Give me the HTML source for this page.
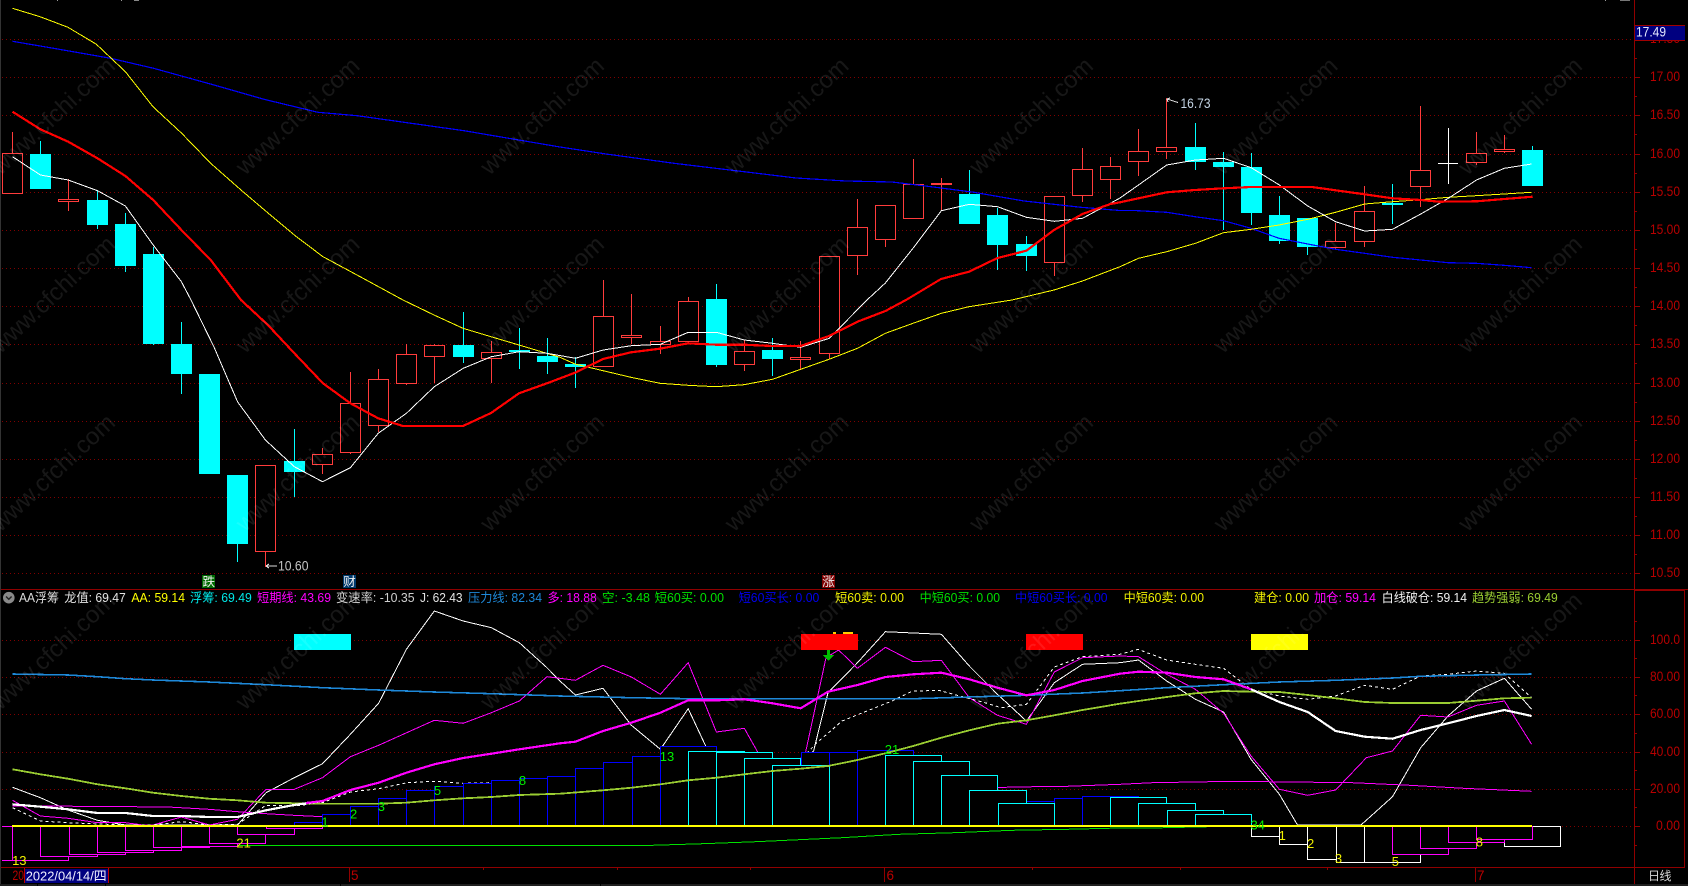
<!DOCTYPE html>
<html lang="zh"><head><meta charset="utf-8"><title>AA浮筹</title>
<style>
html,body{margin:0;padding:0;background:#000;width:1688px;height:886px;overflow:hidden}
svg{display:block;position:absolute;left:0;top:0}
text{font-family:"Liberation Sans","Noto Sans CJK SC",sans-serif}
.c{shape-rendering:crispEdges}
.l{fill:none;stroke-linejoin:round;shape-rendering:crispEdges}
.ax text{font-size:13.5px;fill:#b80000}
.lg text{font-size:12.5px}
.n text{font-size:13px;text-anchor:middle}
.wm text{font-size:24px;fill:#fff;fill-opacity:.09}
</style></head><body>
<svg width="1688" height="886" viewBox="0 0 1688 886" xmlns="http://www.w3.org/2000/svg">
<rect width="1688" height="886" fill="#000"/>
<!-- frame -->
<g class="c">
<rect x="0" y="0" width="1" height="884" fill="#333"/>
<rect x="57" y="0" width="1" height="1" fill="#999"/><rect x="121" y="0" width="1" height="1" fill="#999"/><rect x="134" y="0" width="5" height="1" fill="#888"/>
<rect x="1605" y="0" width="1" height="1" fill="#999"/><rect x="1620" y="0" width="10" height="1" fill="#777"/>
</g>
<!-- grid -->
<path class="l" stroke="#800000" stroke-dasharray="1 3" d="M2 39.5H1634M2 77.5H1634M2 115.5H1634M2 154.5H1634M2 192.5H1634M2 230.5H1634M2 268.5H1634M2 306.5H1634M2 344.5H1634M2 383.5H1634M2 421.5H1634M2 459.5H1634M2 497.5H1634M2 535.5H1634M2 573.5H1634M2 640.5H1634M2 677.5H1634M2 714.5H1634M2 752.5H1634M2 789.5H1634M2 826.5H1634"/>
<!-- candle wicks -->
<path class="l" stroke="#ff3c3c" d="M12.5 132V153M68.5 179V211M265.5 552V567M322.5 448V474M350.5 372V454M378.5 369V432M406.5 344V385M434.5 344V383M491.5 341V383M603.5 280V367M631.5 294V344M660.5 326V354M688.5 297V342M744.5 340V371M800.5 341V369M829.5 256V359M857.5 199V275M885.5 205V247M913.5 159V219M941.5 178V211M1054.5 196V276M1082.5 148V202M1110.5 157V199M1138.5 129V176M1166.5 98V159M1335.5 223V249M1364.5 186V247M1420.5 106V207M1476.5 132V165M1504.5 135V153"/>
<path class="l" stroke="#00ffff" d="M40.5 141V189M97.5 190V229M125.5 213V272M153.5 247V345M181.5 322V394M237.5 475V562M294.5 429V497M463.5 312V363M519.5 328V369M547.5 338V374M575.5 357V388M716.5 284V367M772.5 338V376M969.5 170V224M997.5 208V270M1026.5 236V271M1195.5 123V170M1223.5 152V230M1251.5 153V225M1279.5 196V244M1307.5 218V255M1392.5 184V224M1532.5 146V186"/>
<!-- cyan bodies -->
<g class="c" fill="#00ffff">
<rect x="30" y="154" width="21" height="35"/><rect x="87" y="200" width="21" height="25"/><rect x="115" y="224" width="21" height="42"/><rect x="143" y="254" width="21" height="90"/><rect x="171" y="344" width="21" height="30"/><rect x="199" y="374" width="21" height="100"/><rect x="227" y="475" width="21" height="69"/><rect x="284" y="461" width="21" height="11"/><rect x="453" y="345" width="21" height="12"/><rect x="509" y="350" width="21" height="2"/><rect x="537" y="356" width="21" height="6"/><rect x="565" y="364" width="21" height="3"/><rect x="706" y="299" width="21" height="66"/><rect x="762" y="350" width="21" height="9"/><rect x="959" y="194" width="21" height="30"/><rect x="987" y="215" width="21" height="30"/><rect x="1016" y="244" width="21" height="12"/><rect x="1185" y="147" width="21" height="15"/><rect x="1213" y="162" width="21" height="5"/><rect x="1241" y="167" width="21" height="46"/><rect x="1269" y="215" width="21" height="26"/><rect x="1297" y="218" width="21" height="29"/><rect x="1382" y="203" width="21" height="2"/><rect x="1522" y="150" width="21" height="36"/>
</g>
<!-- red hollow bodies -->
<g class="c" fill="#000" stroke="#ff3c3c">
<rect x="2.5" y="153.5" width="20" height="40"/><rect x="58.5" y="199.5" width="20" height="2"/><rect x="255.5" y="465.5" width="20" height="86"/><rect x="312.5" y="454.5" width="20" height="10"/><rect x="340.5" y="403.5" width="20" height="49"/><rect x="368.5" y="379.5" width="20" height="46"/><rect x="396.5" y="354.5" width="20" height="29"/><rect x="424.5" y="345.5" width="20" height="11"/><rect x="481.5" y="352.5" width="20" height="6"/><rect x="593.5" y="316.5" width="20" height="50"/><rect x="621.5" y="335.5" width="20" height="2"/><rect x="650.5" y="341.5" width="20" height="3"/><rect x="678.5" y="301.5" width="20" height="40"/><rect x="734.5" y="351.5" width="20" height="13"/><rect x="790.5" y="357.5" width="20" height="2"/><rect x="819.5" y="256.5" width="20" height="97"/><rect x="847.5" y="227.5" width="20" height="28"/><rect x="875.5" y="205.5" width="20" height="34"/><rect x="903.5" y="184.5" width="20" height="34"/><rect x="1044.5" y="196.5" width="20" height="66"/><rect x="1072.5" y="169.5" width="20" height="26"/><rect x="1100.5" y="166.5" width="20" height="13"/><rect x="1128.5" y="151.5" width="20" height="10"/><rect x="1156.5" y="147.5" width="20" height="4"/><rect x="1325.5" y="241.5" width="20" height="6"/><rect x="1354.5" y="211.5" width="20" height="30"/><rect x="1410.5" y="170.5" width="20" height="16"/><rect x="1466.5" y="153.5" width="20" height="9"/><rect x="1494.5" y="149.5" width="20" height="2"/>
</g>
<rect class="c" x="931" y="183" width="21" height="2" fill="#ff3c3c"/>
<path class="l" stroke="#fff" d="M1448.5 128V184M1438 163.5H1458"/>
<!-- MAs -->
<polyline class="l" stroke="#0000ff" stroke-width="1.2" points="12.5,41.3 53.6,48.3 110.7,58.3 153.6,68.3 214,85 264,99.3 318,112.3 357,115.7 407,122.7 464,130.7 560,147 606,154 674,163.3 749,172.3 796,178 846,181 892,182 931,186.7 974,192.3 1024,201 1081,207.3 1120,210.5 1134,210.5 1166.7,212.3 1195,216.7 1223.6,220.7 1251,228.3 1279,238.3 1307.7,244 1335.6,249.3 1364.6,253.3 1392.5,257.3 1420.7,260 1448,262.7 1476,263.3 1504,265.3 1531.6,267.7"/>
<polyline class="l" stroke="#ffff00" stroke-width="1" points="12.5,8.3 40,16.7 68,27.3 96.4,44.3 125.4,71.7 153,106.7 181.4,133 210.7,163.3 241,190 268,213 296.4,236.7 323,256.7 357,275 403,300 434,315 463,328.3 491,336.7 519,345 560,357.3 575,364 603,370.7 631,377.3 660,383.3 688,385.3 716,386.7 744,384.7 772.5,379.3 800.7,369.3 829,359.3 857.5,348.3 885.4,333.3 913,323.3 941.4,313.3 969,306.7 1012,300 1054,290 1082.5,281 1120,266.7 1138.5,258.3 1166.7,251.7 1195.4,243.3 1223.6,232.7 1251,229.3 1279,225 1307.7,219.3 1335.6,212.3 1364.6,204 1392.5,201.7 1420.7,199.7 1448,197.3 1476,195.7 1504,194 1531.6,192.3"/>
<polyline class="l" stroke="#fff" stroke-width="1" points="12.5,156.7 40.4,175 68.2,180 97.5,190.7 125.4,206 153.2,245 181.4,281.7 191,300 214,347 237.5,401.7 265.4,440 294.3,466.7 322.5,481.7 350.4,467.7 378.2,433.3 406.4,413.3 434.3,386.7 463.2,368.3 491.4,356.7 519.3,351.7 547.1,353.3 575.4,358.3 603.2,350 631.4,345.7 660.4,344.3 688.2,332.3 716.4,332.3 744.3,340 772.5,343.3 800.7,347.3 829.3,338.3 867,300 885.4,283 913.2,248 941.4,210.7 969.3,204.3 997.5,206.7 1026.4,217.3 1054.3,221.3 1082.5,218.3 1110.4,203.3 1120,198 1138.5,185 1166.7,165 1195.4,160 1223.6,158.3 1251.2,167.7 1279.4,185 1307.7,206 1335.6,221.7 1364.6,231 1392.5,229.3 1420.7,214 1448.3,198.3 1476.5,180 1504.4,168.3 1531.6,164"/>
<polyline class="l" stroke="#ff0000" stroke-width="2.2" points="12.5,111.7 40.4,129.3 68.2,141.7 97.5,158.3 125.4,176 153.2,200 181.4,230 210.7,260 241,300 267.9,325 296,355 323,383.3 350.4,403.3 378.2,418.3 403,426 463,426 491,413 519,393.3 547,383.3 575,372.7 603,359 631,352.3 660,348.7 688,343.3 716,344.7 744,344.7 772,346 800.7,346 829,336 857.5,321.7 885.4,311 906,300 941,279 969,271.7 997.5,258 1026.4,250.7 1054,230 1082.5,214 1110.4,204 1120,202.3 1138.5,198.3 1166.7,192.3 1195,190 1223.6,188.3 1251,187 1279,187 1312,187 1335.6,190.3 1364.6,194.3 1392.5,198.3 1420.7,200 1439,201.7 1476.5,201.3 1504.4,199 1532.7,196.7"/>
<!-- thin lower lines -->
<polyline class="l" stroke="#fff" points="12.5,787.3 40.4,797.7 68,810 97.5,820.3 125.4,825 237.5,825 266,792.7 294.3,777.7 322.5,763.7 350.4,734.3 378.6,703.3 406.4,649.3 434.3,611 463.2,621 491.4,627.7 519.3,642.7 547,667.7 560,681 575.4,695 603,688.3 631.4,725.3 660.4,749.3 688.2,708.7 705.7,746 716,760 805,760 813.6,751 828,692.7 857.5,662.7 885.4,631.7 941.4,634.3 969.3,666 997.5,694.3 1026.4,721 1054.3,682.7 1082.5,664.3 1120,662.7 1138.5,660 1166.7,681 1195.4,699.3 1223.6,712 1251,759.3 1279.4,794.3 1297.5,825 1361,825 1392.5,796.7 1420.7,747.7 1448,716 1476.5,691 1504.4,678.3 1531.6,709.3"/>
<polyline class="l" stroke="#ff00ff" points="12.5,800.3 40.4,816 68,818.3 97.5,822.7 125.4,822.7 143,825 153,825 181.4,817 209.3,825 237.5,819.3 266,789.3 294.3,789.3 322.5,777.7 350.4,756.7 378.6,745.3 434.3,720.3 463.2,723.3 491.4,712.7 519.3,701 547,676.7 560,678.3 575.4,680.3 603,665.3 631.4,677 660.4,694.3 688.2,662.7 716.4,732 744.3,728.3 757.5,751.7 770,765 796,765 805.7,751.7 826,657.7 838.6,650 857.5,668.3 885.4,647.3 913.2,661.7 941.4,660.3 969.3,697.7 997.5,715.3 1026.4,724.3 1054.3,672 1082.5,657.7 1120,656 1138.5,656.7 1166.7,674.3 1195.4,689.3 1223.6,713.3 1251,756 1279.4,789.3 1307.7,795.3 1335.6,790 1366.4,757.7 1392.5,751 1420.7,715.3 1448,717 1476.5,705.3 1504.4,701 1531.6,744.3"/>
<polyline class="l" stroke="#fff" stroke-dasharray="3 3" points="12.5,807.7 40.4,821 68,822.7 125.4,825 153,825 182,821.7 209.3,825 237.5,824.3 266,805.3 294.3,806 322.5,802.7 350.4,792 378.6,788.7 407,782.7 434.3,781.3 463,783.3 491,782.7 520,782 800,760 817,742.7 842,721 867,711 892,701 912,691.3 938.6,690.3 960,696 985,702.7 1001,707.7 1026.4,704.3 1054.3,667 1082.5,656.7 1120,654.3 1138,649.3 1166.7,660 1195.4,664.3 1223.6,668.3 1251,689.3 1279.4,696 1307.7,699.3 1335.6,696 1364.6,685.3 1392.5,689.3 1420.7,676 1448,674.3 1476.5,671 1504.4,673.3 1531.6,697.7"/>
<polyline class="l" stroke="#ff00ff" points="12.5,806 40.4,806 168,807 209,809.3 237.5,811.7 266,813.7 294,815.3 322.5,816.7 340,817 980,789 997.5,787.7 1012,787 1067,786.3 1120,784.3 1152.6,782.7 1210.6,781.7 1265,781.7 1352,782.7 1410,785.3 1464,788.3 1531.6,791.3"/>
<polyline class="l" stroke="#00e000" points="237,845.5 645.7,845.5 703,843.7 756,841.7 842,837.7 899,834.3 954.6,832.7 1012,830.3 1067,829.3 1120,828 1152,828 1209,826.7"/>
<!-- histogram bars -->
<g class="c" fill="#000" stroke="#0000ff">
<rect x="294.5" y="822.5" width="56" height="4"/><rect x="322.5" y="814.5" width="56" height="12"/><rect x="350.5" y="806.5" width="56" height="20"/><rect x="378.5" y="798.5" width="56" height="28"/><rect x="406.5" y="790.5" width="57" height="36"/><rect x="434.5" y="786.5" width="57" height="40"/><rect x="463.5" y="783.5" width="56" height="43"/><rect x="491.5" y="780.5" width="56" height="46"/><rect x="519.5" y="778.5" width="56" height="48"/><rect x="547.5" y="776.5" width="56" height="50"/><rect x="575.5" y="768.5" width="56" height="58"/><rect x="603.5" y="762.5" width="57" height="64"/><rect x="632.5" y="756.5" width="56" height="70"/><rect x="660.5" y="746.5" width="56" height="80"/>
<rect x="801.5" y="752.5" width="56" height="74"/><rect x="829.5" y="752.5" width="56" height="74"/><rect x="857.5" y="750.5" width="56" height="76"/>
<rect x="1026.5" y="801.5" width="56" height="25"/><rect x="1054.5" y="798.5" width="56" height="28"/><rect x="1082.5" y="796.5" width="56" height="30"/>
</g>
<g class="c" fill="#000" stroke="#00ffff">
<rect x="688.5" y="751.5" width="56" height="75"/><rect x="716.5" y="752.5" width="56" height="74"/><rect x="744.5" y="758.5" width="56" height="68"/><rect x="772.5" y="765.5" width="57" height="61"/>
<rect x="885.5" y="755.5" width="56" height="71"/><rect x="913.5" y="761.5" width="56" height="65"/><rect x="941.5" y="775.5" width="56" height="51"/><rect x="969.5" y="790.5" width="57" height="36"/><rect x="998.5" y="803.5" width="56" height="23"/>
<rect x="1110.5" y="797.5" width="56" height="29"/><rect x="1138.5" y="803.5" width="57" height="23"/><rect x="1167.5" y="810.5" width="56" height="16"/><rect x="1195.5" y="814.5" width="56" height="12"/>
</g>
<g class="c" fill="#000" stroke="#fff">
<rect x="1251.5" y="826.5" width="56" height="10"/><rect x="1279.5" y="826.5" width="56" height="18"/><rect x="1307.5" y="826.5" width="57" height="33"/><rect x="1336.5" y="826.5" width="56" height="36"/><rect x="1364.5" y="826.5" width="56" height="36"/><rect x="1504.5" y="826.5" width="56" height="20"/>
</g>
<g class="c" fill="#000" stroke="#ff00ff">
<path fill="none" d="M2 826.5H12M2 860.5H40.5V826"/>
<rect x="12.5" y="826.5" width="56" height="34"/><rect x="40.5" y="826.5" width="57" height="30"/><rect x="69.5" y="826.5" width="56" height="28"/><rect x="97.5" y="826.5" width="56" height="26"/><rect x="125.5" y="826.5" width="56" height="24"/><rect x="153.5" y="826.5" width="56" height="21"/><rect x="181.5" y="826.5" width="56" height="20"/><rect x="209.5" y="826.5" width="56" height="17"/><rect x="237.5" y="826.5" width="57" height="8"/><rect x="266.5" y="826.5" width="56" height="2"/>
<rect x="1392.5" y="826.5" width="56" height="28"/><rect x="1420.5" y="826.5" width="56" height="22"/><rect x="1448.5" y="826.5" width="56" height="16"/><rect x="1476.5" y="826.5" width="56" height="13"/>
</g>
<!-- thick lower lines -->
<polyline class="l" stroke="#1e88d8" stroke-width="1.6" points="12.5,674 68,675 97.5,676.7 125.4,678.7 153,680 209,682 266,684.7 322.5,687.7 378.6,690 434,692 491.4,693.7 560,696 631,697.7 688.6,698.7 913.6,698.7 969,697 1026.4,695.3 1082.5,693 1120,690.7 1166.7,687.7 1223.6,684.7 1279.4,682 1335.6,680.3 1392.5,678 1420.7,676.3 1476.5,675 1531.6,674"/>
<polyline class="l" stroke="#9acd32" stroke-width="1.8" points="12.5,769.3 40.4,774.3 68,778.7 97.5,784.3 125.4,788.3 153,792.7 181.4,796 209,798.7 237.5,800.3 266,802.7 322.5,803.7 378.6,803.7 406,802.7 434.3,800.3 463,798.3 491.4,797 519.3,795 560,793.7 603,790.3 631.4,787.7 660.4,784.3 688.2,780.3 716.4,777.7 744.3,774.3 772.5,771 800.7,768.7 828,766 857.5,760 885.4,753.3 913.2,746 941.4,737.7 969.3,730.3 997.5,723.7 1026.4,720.3 1054.3,715.3 1082.5,710 1120,703.7 1138.5,701 1166.7,697 1195.4,693.3 1223.6,691 1251,691.7 1279.4,692 1307.7,695 1335.6,698.3 1364.6,702 1392.5,703 1448,703 1476.5,700.7 1504.4,698.3 1531.6,697.7"/>
<polyline class="l" stroke="#fff" stroke-width="2.2" points="12.5,804.3 40.4,806.7 68,809.3 97.5,813 125.4,813 153,816 181.4,816 209,817 237.5,817 266,810.3 294,805 322.5,801"/>
<polyline class="l" stroke="#fff" stroke-width="2.2" points="1251,689.3 1279.4,702 1307.7,712 1335.6,731 1364.6,736.7 1392.5,738.7 1420.7,730 1448,723.3 1476.5,716 1504.4,710 1531.6,716"/>
<polyline class="l" stroke="#ff00ff" stroke-width="2.2" points="306,803 322.5,801 350.4,790 378.6,782.7 406.4,772.7 434.3,764.3 463.2,758 491.4,753.7 519.3,749.3 560,743.3 575.4,741.7 603,731 631.4,722.7 660.4,712.7 688.2,700.3 716.4,700.3 744.3,699.3 772.5,703.3 800.7,708.3 828,691.7 857.5,685 885.4,677 913.2,674.3 941.4,672.7 969.3,679.3 997.5,687.7 1026.4,695.3 1054.3,690 1082.5,681 1120,673.7 1138.5,671.7 1166.7,672.7 1195.4,677 1223.6,679.3 1251,689.3"/>
<!-- zero line -->
<rect class="c" x="12" y="825" width="1520" height="2" fill="#ffff00"/>
<!-- signal rects -->
<g class="c">
<rect x="833" y="632" width="3" height="2" fill="#ffcc00"/><rect x="843" y="632" width="10" height="2" fill="#ffcc00"/>
<rect x="294" y="634" width="57" height="16" fill="#00ffff"/>
<rect x="801" y="634" width="57" height="16" fill="#ff0000"/>
<rect x="1026" y="634" width="57" height="16" fill="#ff0000"/>
<rect x="1251" y="634" width="57" height="16" fill="#ffff00"/>
<path fill="#00c000" d="M827 650h3v5h4l-5.500 6-5.500-6h4z"/>
</g>
<!-- bar numerals -->
<g class="n">
<g fill="#00f000">
<text x="325" y="826.500">1</text><text x="353.600" y="818.500">2</text><text x="381.400" y="810.800">3</text><text x="437.500" y="794.800">5</text><text x="522.500" y="784.800">8</text><text x="667" y="760.800">13</text><text x="892" y="754">21</text><text x="1257.700" y="829.500">34</text>
</g>
<g fill="#f0f000">
<text x="19.300" y="864.800">13</text><text x="243.600" y="847.500">21</text><text x="1282.300" y="840">1</text><text x="1310.600" y="848">2</text><text x="1338.500" y="863">3</text><text x="1395.400" y="866">5</text><text x="1479.400" y="846.500">8</text>
</g>
</g>
<!-- hi lo labels -->
<path class="l" stroke="#ddd" d="M266 566H277M266 566l3-2M266 566l3 2M1167 99L1178 102.500M1167 99l3-1M1167 99l1 3"/>
<text x="278" y="570.500" font-size="13.500" fill="#c4c4c4" textLength="30.500" lengthAdjust="spacingAndGlyphs">10.60</text>
<text x="1180.500" y="108" font-size="13.500" fill="#c4d4e4" textLength="30" lengthAdjust="spacingAndGlyphs">16.73</text>
<!-- signal boxes -->
<rect class="c" x="202" y="575" width="13" height="13" fill="#006a00"/>
<text x="202.500" y="586" font-size="12.500" fill="#f0f0f0">跌</text>
<rect class="c" x="343" y="575" width="13" height="13" fill="#003a6e"/>
<text x="343.300" y="586" font-size="12.500" fill="#f0f0f0">财</text>
<rect class="c" x="822" y="575" width="13" height="13" fill="#800000"/>
<text x="822.300" y="586" font-size="12.500" fill="#f0f0f0">涨</text>
<!-- separators -->
<g class="c">
<rect x="1" y="589" width="1687" height="1" fill="#900000"/>
<rect x="1" y="867" width="1684" height="1" fill="#900000"/>
<rect x="1634" y="0" width="1" height="884" fill="#900000"/>
<rect x="1635" y="590" width="50" height="1" fill="#900000"/>
<rect x="1684" y="590" width="1" height="278" fill="#900000"/>
<rect x="0" y="884" width="1688" height="2" fill="#1f1f1f"/>
<rect x="37" y="884" width="1" height="2" fill="#000"/><rect x="105" y="884" width="1" height="2" fill="#000"/><rect x="340" y="884" width="1" height="2" fill="#000"/><rect x="600" y="884" width="1" height="2" fill="#000"/>
</g>
<!-- ticks -->
<path class="l" stroke="#900000" d="M1634 39.500h6M1634 77.500h6M1634 115.500h6M1634 154.500h6M1634 192.500h6M1634 230.500h6M1634 268.500h6M1634 306.500h6M1634 344.500h6M1634 383.500h6M1634 421.500h6M1634 459.500h6M1634 497.500h6M1634 535.500h6M1634 573.500h6M1634 58.500h3M1634 96.500h3M1634 134.500h3M1634 173.500h3M1634 211.500h3M1634 249.500h3M1634 287.500h3M1634 325.500h3M1634 363.500h3M1634 402.500h3M1634 440.500h3M1634 478.500h3M1634 516.500h3M1634 554.500h3M1634 640.500h6M1634 677.500h6M1634 714.500h6M1634 752.500h6M1634 789.500h6M1634 826.500h6M1634 621.500h3M1634 658.500h3M1634 695.500h3M1634 733.500h3M1634 770.500h3M1634 807.500h3M1634 845.500h3M349.500 867V882M884.500 867V882M1475.500 867V882M483.500 867v3M617.500 867v3M750.500 867v3M1032.500 867v3M1180.500 867v3M1327.500 867v3"/>
<!-- axis labels -->
<g class="ax">
<text x="1650" y="43.200" textLength="30" lengthAdjust="spacingAndGlyphs">17.50</text>
<text x="1650" y="81" textLength="30" lengthAdjust="spacingAndGlyphs">17.00</text>
<text x="1650" y="119" textLength="30" lengthAdjust="spacingAndGlyphs">16.50</text>
<text x="1650" y="158" textLength="30" lengthAdjust="spacingAndGlyphs">16.00</text>
<text x="1650" y="196" textLength="30" lengthAdjust="spacingAndGlyphs">15.50</text>
<text x="1650" y="234" textLength="30" lengthAdjust="spacingAndGlyphs">15.00</text>
<text x="1650" y="272" textLength="30" lengthAdjust="spacingAndGlyphs">14.50</text>
<text x="1650" y="310" textLength="30" lengthAdjust="spacingAndGlyphs">14.00</text>
<text x="1650" y="348" textLength="30" lengthAdjust="spacingAndGlyphs">13.50</text>
<text x="1650" y="387" textLength="30" lengthAdjust="spacingAndGlyphs">13.00</text>
<text x="1650" y="425" textLength="30" lengthAdjust="spacingAndGlyphs">12.50</text>
<text x="1650" y="463" textLength="30" lengthAdjust="spacingAndGlyphs">12.00</text>
<text x="1650" y="501" textLength="30" lengthAdjust="spacingAndGlyphs">11.50</text>
<text x="1650" y="539" textLength="30" lengthAdjust="spacingAndGlyphs">11.00</text>
<text x="1650" y="577" textLength="30" lengthAdjust="spacingAndGlyphs">10.50</text>
<text x="1650" y="644" textLength="30" lengthAdjust="spacingAndGlyphs">100.0</text>
<text x="1650" y="681" textLength="30" lengthAdjust="spacingAndGlyphs">80.00</text>
<text x="1650" y="718" textLength="30" lengthAdjust="spacingAndGlyphs">60.00</text>
<text x="1650" y="756" textLength="30" lengthAdjust="spacingAndGlyphs">40.00</text>
<text x="1650" y="793" textLength="30" lengthAdjust="spacingAndGlyphs">20.00</text>
<text x="1656" y="830" textLength="24" lengthAdjust="spacingAndGlyphs">0.00</text>
<text x="12.500" y="880" textLength="11.500" lengthAdjust="spacingAndGlyphs">20</text>
<text x="351" y="880" textLength="7">5</text>
<text x="886.500" y="880" textLength="7">6</text>
<text x="1477" y="880" textLength="7">7</text>
</g>
<!-- price tag -->
<rect class="c" x="1635" y="25" width="50" height="16" fill="#000080"/>
<path class="l" stroke="#a00000" d="M1635 25.500H1685M1635 40.500H1685"/>
<text x="1636" y="36.500" font-size="13.500" fill="#e4e8ff" textLength="30" lengthAdjust="spacingAndGlyphs">17.49</text>
<!-- date -->
<rect class="c" x="24" y="869" width="84" height="14" fill="#000080"/>
<path class="l" stroke="#c00000" d="M24.500 868V883M108.500 868V883"/>
<text x="25.700" y="880.500" font-size="13" fill="#f0f0ff" textLength="81" lengthAdjust="spacingAndGlyphs">2022/04/14/四</text>
<text x="1648" y="880" font-size="12" fill="#d8d8d8" textLength="23.500">日线</text>
<!-- legend -->
<circle cx="8.800" cy="597.700" r="5.800" fill="#8a8a8a"/>
<path d="M6 596.500l2.800 2.800 2.800-2.800" fill="none" stroke="#222" stroke-width="1.400"/>
<g class="lg">
<text x="19" y="602" fill="#dcdcdc" textLength="40" lengthAdjust="spacingAndGlyphs">AA浮筹</text>
<text x="64.300" y="602" fill="#e4e4e4" textLength="61.500" lengthAdjust="spacingAndGlyphs">龙值: 69.47</text>
<text x="131.400" y="602" fill="#ffff00" textLength="53.600" lengthAdjust="spacingAndGlyphs">AA: 59.14</text>
<text x="190" y="602" fill="#00e8e8" textLength="61.800" lengthAdjust="spacingAndGlyphs">浮筹: 69.49</text>
<text x="257" y="602" fill="#ff00ff" textLength="74" lengthAdjust="spacingAndGlyphs">短期线: 43.69</text>
<text x="336" y="602" fill="#cfcfcf" textLength="78.600" lengthAdjust="spacingAndGlyphs">变速率: -10.35</text>
<text x="420" y="602" fill="#e4e4e4" textLength="42.500" lengthAdjust="spacingAndGlyphs">J: 62.43</text>
<text x="468" y="602" fill="#1e88d8" textLength="74" lengthAdjust="spacingAndGlyphs">压力线: 82.34</text>
<text x="547.500" y="602" fill="#ff00ff" textLength="49.300" lengthAdjust="spacingAndGlyphs">多: 18.88</text>
<text x="602" y="602" fill="#00e000" textLength="48" lengthAdjust="spacingAndGlyphs">空: -3.48</text>
<text x="654.600" y="602" fill="#00e000" textLength="69.400" lengthAdjust="spacingAndGlyphs">短60买: 0.00</text>
<text x="738.600" y="602" fill="#0000f0" textLength="80.700" lengthAdjust="spacingAndGlyphs">短60买长: 0.00</text>
<text x="835" y="602" fill="#f0f000" textLength="69" lengthAdjust="spacingAndGlyphs">短60卖: 0.00</text>
<text x="919.600" y="602" fill="#00e000" textLength="80.400" lengthAdjust="spacingAndGlyphs">中短60买: 0.00</text>
<text x="1015" y="602" fill="#0000f0" textLength="92.500" lengthAdjust="spacingAndGlyphs">中短60买长: 0.00</text>
<text x="1123.600" y="602" fill="#f0f000" textLength="80.400" lengthAdjust="spacingAndGlyphs">中短60卖: 0.00</text>
<text x="1254" y="602" fill="#f0f000" textLength="55" lengthAdjust="spacingAndGlyphs">建仓: 0.00</text>
<text x="1314" y="602" fill="#ff00ff" textLength="62" lengthAdjust="spacingAndGlyphs">加仓: 59.14</text>
<text x="1381.600" y="602" fill="#f0f0f0" textLength="85.400" lengthAdjust="spacingAndGlyphs">白线破仓: 59.14</text>
<text x="1472" y="602" fill="#9acd32" textLength="85.700" lengthAdjust="spacingAndGlyphs">趋势强弱: 69.49</text>
</g>
<!-- watermark -->
<g class="wm">
<text transform="translate(0.500,176) rotate(-43)">www.cfchi.com</text><text transform="translate(245,176) rotate(-43)">www.cfchi.com</text><text transform="translate(489.500,176) rotate(-43)">www.cfchi.com</text><text transform="translate(734,176) rotate(-43)">www.cfchi.com</text><text transform="translate(978.500,176) rotate(-43)">www.cfchi.com</text><text transform="translate(1223,176) rotate(-43)">www.cfchi.com</text><text transform="translate(1467.500,176) rotate(-43)">www.cfchi.com</text>
<text transform="translate(0.500,354.300) rotate(-43)">www.cfchi.com</text><text transform="translate(245,354.300) rotate(-43)">www.cfchi.com</text><text transform="translate(489.500,354.300) rotate(-43)">www.cfchi.com</text><text transform="translate(734,354.300) rotate(-43)">www.cfchi.com</text><text transform="translate(978.500,354.300) rotate(-43)">www.cfchi.com</text><text transform="translate(1223,354.300) rotate(-43)">www.cfchi.com</text><text transform="translate(1467.500,354.300) rotate(-43)">www.cfchi.com</text>
<text transform="translate(0.500,532.600) rotate(-43)">www.cfchi.com</text><text transform="translate(245,532.600) rotate(-43)">www.cfchi.com</text><text transform="translate(489.500,532.600) rotate(-43)">www.cfchi.com</text><text transform="translate(734,532.600) rotate(-43)">www.cfchi.com</text><text transform="translate(978.500,532.600) rotate(-43)">www.cfchi.com</text><text transform="translate(1223,532.600) rotate(-43)">www.cfchi.com</text><text transform="translate(1467.500,532.600) rotate(-43)">www.cfchi.com</text>
<text transform="translate(0.500,710.900) rotate(-43)">www.cfchi.com</text><text transform="translate(245,710.900) rotate(-43)">www.cfchi.com</text><text transform="translate(489.500,710.900) rotate(-43)">www.cfchi.com</text><text transform="translate(734,710.900) rotate(-43)">www.cfchi.com</text><text transform="translate(978.500,710.900) rotate(-43)">www.cfchi.com</text><text transform="translate(1223,710.900) rotate(-43)">www.cfchi.com</text><text transform="translate(1467.500,710.900) rotate(-43)">www.cfchi.com</text>
</g>
</svg>
</body></html>
